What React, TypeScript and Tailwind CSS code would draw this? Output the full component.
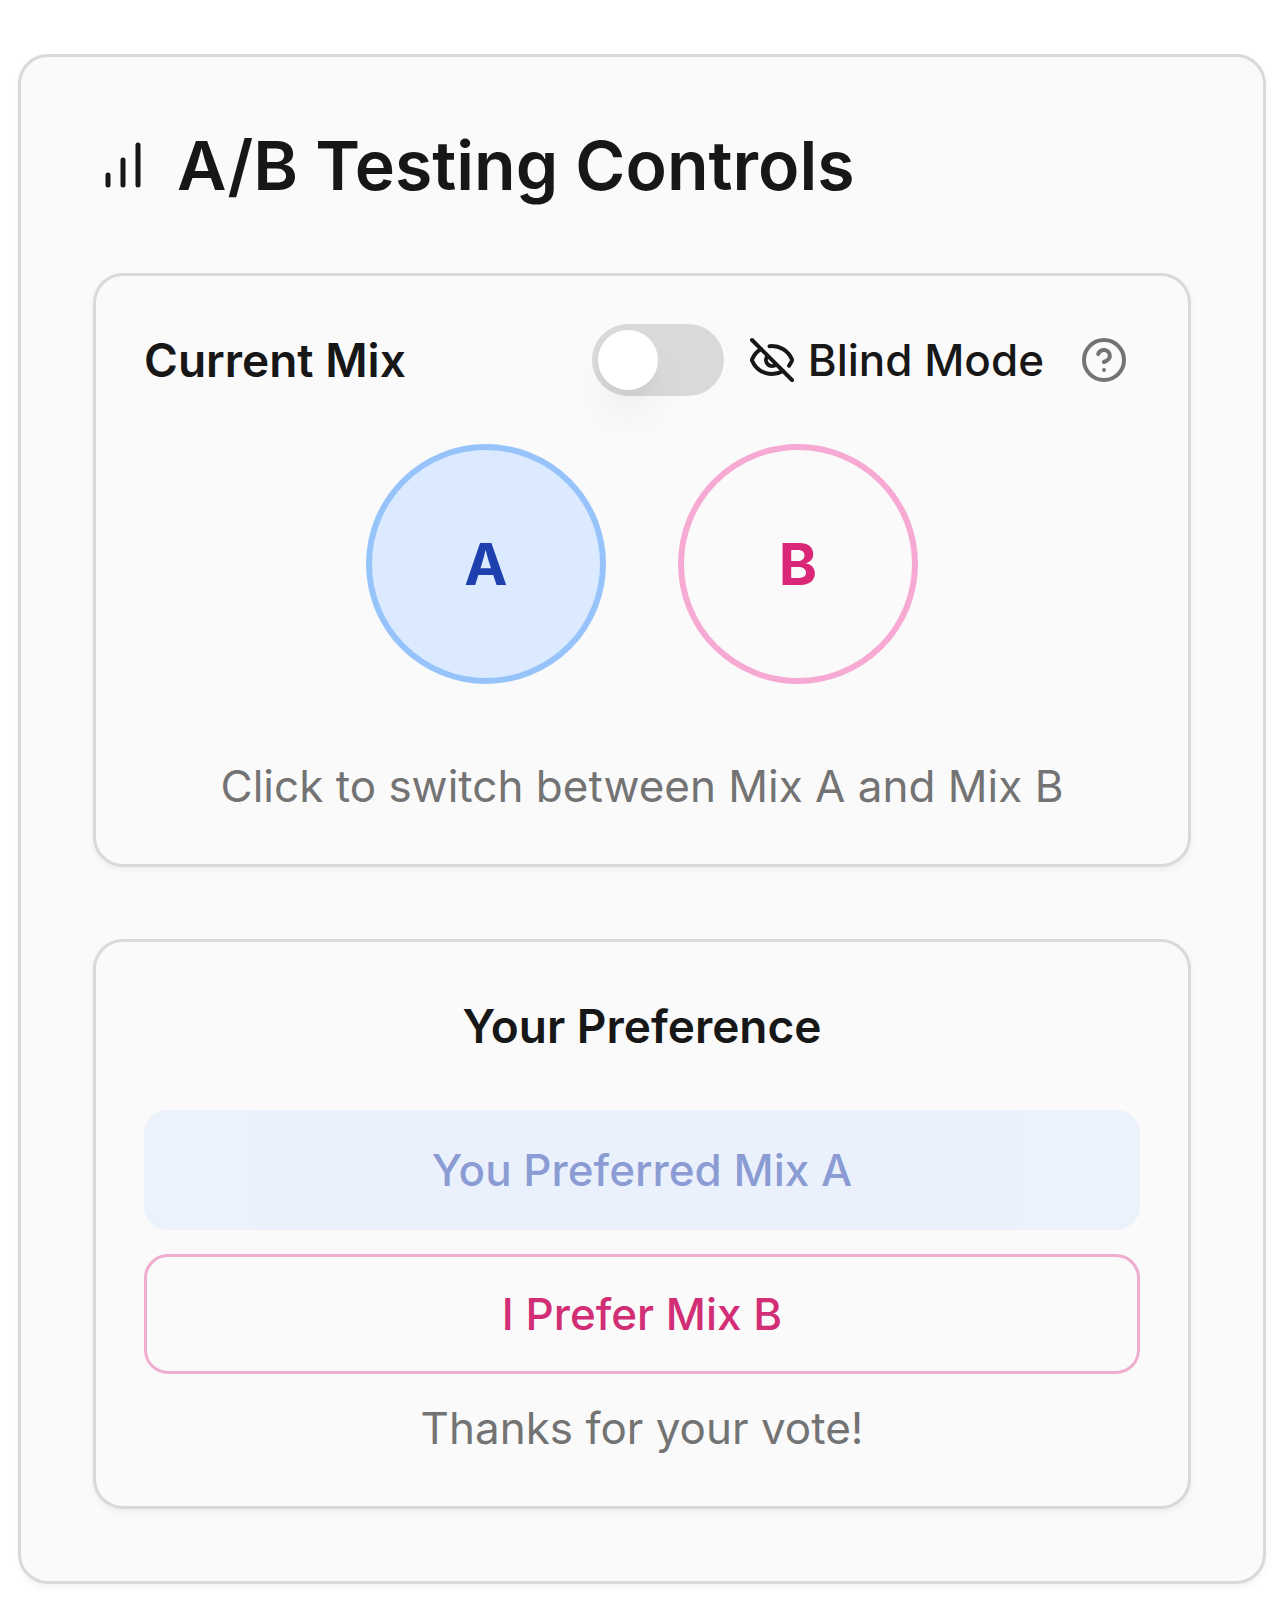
import React, {useState} from 'react'
import {CircleQuestionMark, EyeOff} from 'lucide-react'

type Mix = 'A' | 'B'

/** Three rising bars shown beside the panel title. */
function BarsIcon() {
  return (
    <svg
      viewBox="0 0 24 24"
      className="size-[60px] shrink-0"
      fill="none"
      stroke="currentColor"
      strokeWidth={2}
      strokeLinecap="round"
      aria-hidden="true"
    >
      <path d="M6 20v-4M12 20V10M18 20V4" />
    </svg>
  )
}

export default function App() {
  const [mix, setMix] = useState<Mix>('A')
  const [blind, setBlind] = useState(false)
  const [vote, setVote] = useState<Mix>('A')

  return (
    <div className="bg-white px-[18px] pt-[54px] pb-[30px] font-['Inter',sans-serif] text-[#171717]">
      <main className="flex flex-col gap-[72px] rounded-[30px] border-3 border-[#d9d9d9] bg-[#fafafa] p-[72px] shadow-[0_3px_6px_rgba(0,0,0,0.05)]">
        <header className="flex items-center gap-6">
          <BarsIcon />
          <h1 className="text-[68px] leading-[72px] font-semibold">A/B Testing Controls</h1>
        </header>

        {/* Mix switcher */}
        <section className="rounded-[30px] border-3 border-[#d9d9d9] p-12 shadow-[0_3px_6px_rgba(0,0,0,0.05)]">
          <div className="flex items-center justify-between">
            <h2 className="text-[46px] leading-[72px] font-semibold">Current Mix</h2>
            <div className="flex items-center gap-6">
              <input
                id="blind-mode"
                type="checkbox"
                role="switch"
                checked={blind}
                onChange={(e) => setBlind(e.target.checked)}
                className="h-[72px] w-[132px] appearance-none rounded-full bg-[#d9d9d9] p-1.5 before:block before:size-[60px] before:rounded-full before:bg-white before:shadow-[0_30px_45px_-9px_rgba(0,0,0,0.08),0_12px_18px_-12px_rgba(0,0,0,0.08)] checked:bg-[#171717] checked:before:translate-x-[60px]"
              />
              <label htmlFor="blind-mode" className="flex items-center gap-3 text-[44px] leading-[60px] font-medium">
                <EyeOff className="size-12" />
                Blind Mode
              </label>
              <button type="button" aria-label="About blind mode" className="p-3 text-[#737373]">
                <CircleQuestionMark className="size-12" />
              </button>
            </div>
          </div>

          <div className="mt-12 flex justify-center gap-[72px]">
            <button
              type="button"
              onClick={() => setMix('A')}
              className={`size-[240px] rounded-full border-6 border-[#96c4fa] text-[58px] font-bold text-[#1e40af] ${
                mix === 'A' ? 'bg-[#dbeafe]' : ''
              }`}
            >
              A
            </button>
            <button
              type="button"
              onClick={() => setMix('B')}
              className={`size-[240px] rounded-full border-6 border-[#f6aad3] text-[58px] font-bold text-[#db2777] ${
                mix === 'B' ? 'bg-[#fce7f3]' : ''
              }`}
            >
              B
            </button>
          </div>

          <p className="mt-[72px] text-center text-[44px] leading-[60px] text-[#737373]">
            Click to switch between Mix A and Mix B
          </p>
        </section>

        {/* Vote */}
        <section className="flex flex-col gap-6 rounded-[30px] border-3 border-[#d9d9d9] p-12 text-center shadow-[0_3px_6px_rgba(0,0,0,0.05)]">
          <h2 className="mb-6 text-[46px] leading-[72px] font-semibold">Your Preference</h2>
          <button
            type="button"
            disabled={vote === 'A'}
            onClick={() => setVote('A')}
            className="h-[120px] rounded-[24px] bg-[#dbeafe] text-[44px] leading-[60px] font-medium text-[#1e40af] disabled:opacity-50"
          >
            {vote === 'A' ? 'You Preferred Mix A' : 'I Prefer Mix A'}
          </button>
          <button
            type="button"
            disabled={vote === 'B'}
            onClick={() => setVote('B')}
            className="h-[120px] rounded-[24px] border-3 border-[#efaed0] text-[44px] leading-[60px] font-medium text-[#d12e76] disabled:opacity-50"
          >
            {vote === 'B' ? 'You Preferred Mix B' : 'I Prefer Mix B'}
          </button>
          <p className="text-[44px] leading-[60px] text-[#737373]">Thanks for your vote!</p>
        </section>
      </main>
    </div>
  )
}
